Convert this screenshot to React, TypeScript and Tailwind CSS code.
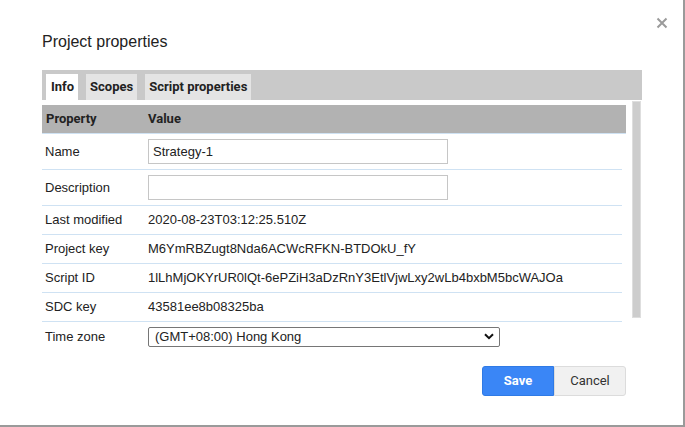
import React, { useState } from "react";

interface Row {
  label: string;
  value?: string;
  kind: "text" | "input" | "select";
}

const rows: Row[] = [
  { label: "Name", value: "Strategy-1", kind: "input" },
  { label: "Description", value: "", kind: "input" },
  { label: "Last modified", value: "2020-08-23T03:12:25.510Z", kind: "text" },
  { label: "Project key", value: "M6YmRBZugt8Nda6ACWcRFKN-BTDOkU_fY", kind: "text" },
  { label: "Script ID", value: "1lLhMjOKYrUR0lQt-6ePZiH3aDzRnY3EtlVjwLxy2wLb4bxbM5bcWAJOa", kind: "text" },
  { label: "SDC key", value: "43581ee8b08325ba", kind: "text" },
  { label: "Time zone", kind: "select" },
];

const tabs = ["Info", "Scopes", "Script properties"];

const App: React.FC = () => {
  const [activeTab, setActiveTab] = useState("Info");
  const [name, setName] = useState("Strategy-1");
  const [description, setDescription] = useState("");

  return (
    <div className="relative w-[685px] h-[427px] bg-white border-r-2 border-b-2 border-[#9a9a9a] font-['Liberation_Sans',Arial,sans-serif] text-[#222] overflow-hidden">
      {/* close button */}
      <button className="absolute left-[655px] top-[16px] w-[13px] h-[13px] flex items-center justify-center">
        <svg width="12" height="12" viewBox="0 0 12 12">
          <path d="M1.5 1.5 L10.5 10.5 M10.5 1.5 L1.5 10.5" stroke="#9b9b9b" strokeWidth="2" />
        </svg>
      </button>

      <div className="pl-[42px] pt-[32px]">
        <h1 className="text-[16px] leading-[20px] text-[#222]">Project properties</h1>

        {/* tab bar */}
        <div className="mt-[18px] w-[600px] h-[30px] bg-[#c9c9c9] flex items-end gap-[8px] pl-[4px] font-['Roboto',Arial,sans-serif] font-bold text-[13px]">
          {tabs.map((tab) => (
            <button
              key={tab}
              onClick={() => setActiveTab(tab)}
              className={`h-[26px] px-[4px] leading-[26px] text-[#222] ${
                activeTab === tab ? "bg-white pl-[5px]" : "bg-[#e4e4e4]"
              }`}
            >
              {tab}
            </button>
          ))}
        </div>

        <div className="flex gap-[6px]">
          <div className="w-[584px] pt-[5px]">
            {/* header */}
            <div className="h-[29px] bg-[#b2b2b2] border-b border-[#cfe2f3] flex items-center font-['Roboto',Arial,sans-serif] font-bold text-[13px] text-[#222]">
              <div className="w-[106px] pl-[4px]">Property</div>
              <div>Value</div>
            </div>

            <div className="w-[580px] text-[13px]">
              {rows.map((row, i) => (
                <div
                  key={row.label}
                  className={`flex items-center ${
                    row.kind === "input" ? "h-[36px]" : "h-[29px]"
                  } ${i < rows.length - 1 ? "border-b border-[#cfe2f3]" : ""}`}
                >
                  <div className="w-[106px] pl-[3px]">{row.label}</div>
                  {row.kind === "text" && <div className="whitespace-nowrap">{row.value}</div>}
                  {row.kind === "input" && (
                    <input
                      type="text"
                      value={row.label === "Name" ? name : description}
                      onChange={(e) =>
                        row.label === "Name" ? setName(e.target.value) : setDescription(e.target.value)
                      }
                      className="w-[300px] h-[25px] border border-[#c6c6c6] px-[4px] text-[13px] outline-none"
                    />
                  )}
                  {row.kind === "select" && (
                    <div className="relative w-[352px] h-[20px]">
                      <select className="appearance-none w-full h-full border border-[#767676] rounded-[2px] pl-[6px] text-[13px] leading-[18px] bg-white text-[#222] outline-none">
                        <option>(GMT+08:00) Hong Kong</option>
                      </select>
                      <svg
                        className="absolute right-[6px] top-[6px] pointer-events-none"
                        width="10"
                        height="7"
                        viewBox="0 0 10 7"
                      >
                        <path d="M1 1.2 L5 5.2 L9 1.2" stroke="#111" strokeWidth="2" fill="none" />
                      </svg>
                    </div>
                  )}
                </div>
              ))}
            </div>

            {/* buttons */}
            <div className="flex justify-end mt-[15px] font-['Roboto',Arial,sans-serif] text-[13px]">
              <button className="w-[72px] h-[30px] bg-[#3a86f6] border border-[#2f7ae5] rounded-l-[3px] text-white font-bold">
                Save
              </button>
              <button className="w-[72px] h-[30px] bg-[#f1f1f1] border border-[#dcdcdc] rounded-r-[3px] text-[#333]">
                Cancel
              </button>
            </div>
          </div>

          {/* scrollbar */}
          <div className="mt-[1px] w-[9px] h-[217px] bg-[#cdcdcd] border border-[#dedede]"></div>
        </div>
      </div>
    </div>
  );
};

export default App;
